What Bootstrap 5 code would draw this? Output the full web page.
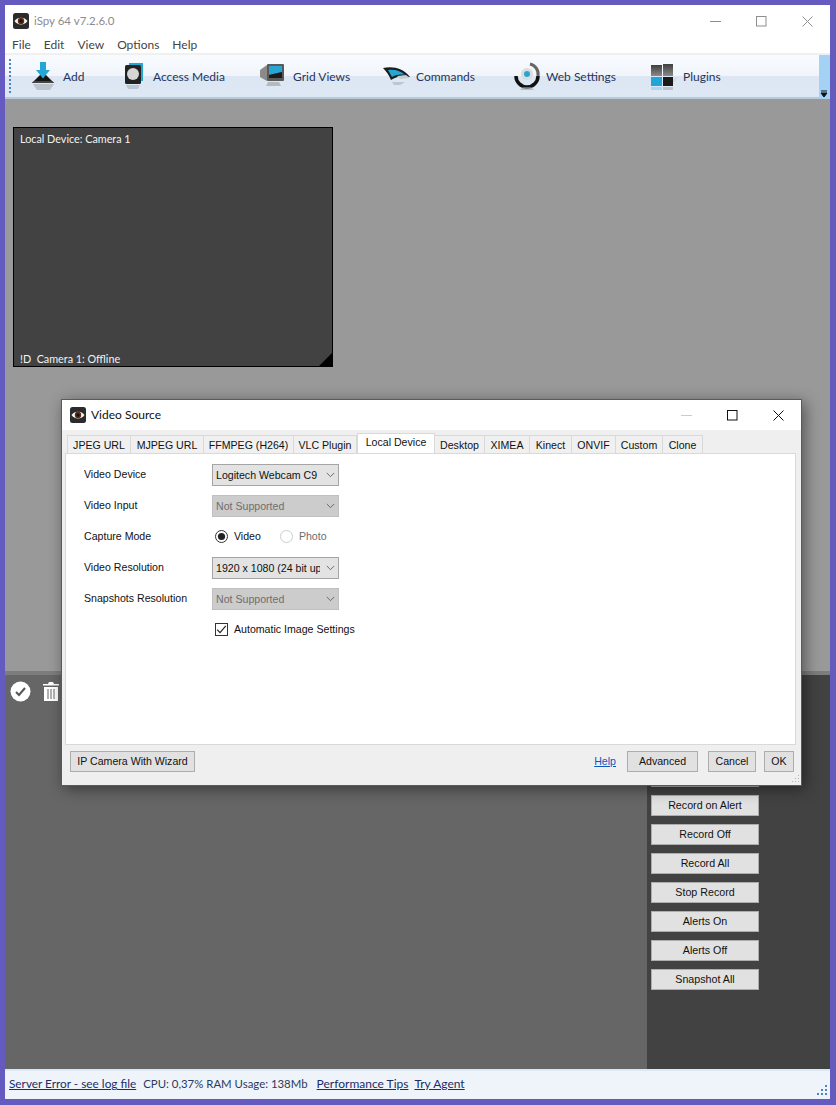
<!DOCTYPE html>
<html lang="en">
<head>
<meta charset="utf-8">
<title>iSpy 64</title>
<link href="https://cdn.jsdelivr.net/npm/bootstrap@5.3.0/dist/css/bootstrap.min.css" rel="stylesheet">
<style>
html,body{height:100%;margin:0}
body{background:#645ac0;font-family:Lato,"Open Sans",sans-serif;font-size:12px;color:#111;overflow:hidden}
.app-win{position:relative;margin:5px 6px 0 5px;height:1094px;background:#fff;display:flex;flex-direction:column}
.title-row{height:32px;padding:0 0 0 8px;flex:none;color:#8c8c8c;font-size:11.5px}
.logo-ico{flex:none;display:block;margin-right:5px}
.win-ctl{width:46px;height:32px;display:flex;align-items:center;justify-content:center}
.menu-row{height:16px;flex:none;padding-left:7px;gap:13px;line-height:15px;color:#444}
.menu-row span{display:block}
.tool-strip{height:46px;flex:none;border-top:2px solid #f0f0f0;border-bottom:2px solid #b5cbdc;background:linear-gradient(#f8fbfe 0,#f1f5fb 50%,#dce7f3 51%,#dde8f3 100%);position:relative;padding-left:4px}
.grip{width:2px;height:34px;border-left:2px dotted #4a86c5;flex:none;margin-right:19px}
.tool-item{display:flex;align-items:center;color:#26345c;line-height:1;white-space:nowrap;flex:none}
.tool-item span{margin:1px 0 0 5px}
.tool-ico{flex:none;display:block}
.ti1{width:90px}.ti2{width:140px}.ti3{width:123px}.ti4{width:130px}.ti5{width:137px}
.over-flow{position:absolute;right:0;top:0;bottom:-2px;width:11px;background:#a3d2f5}
.over-flow svg{position:absolute;bottom:0;left:0}
.grey-area{height:572px;flex:none;background:#999;padding:28px 0 0 8px}
.cam-tile{width:320px;height:240px;background:#424242;border:1px solid #000;color:#f2f2f2;position:relative;font-size:10.8px;display:flex;flex-direction:column;justify-content:space-between;padding:3px 6px 0 6px}
.cam-foot{margin-bottom:-1px}
.cam-corner{position:absolute;right:0;bottom:0;width:0;height:0;border-left:13px solid transparent;border-bottom:13px solid #000}
.split-bar{height:4px;flex:none;background:#7d7d7d}
.lower-wrap{flex:1 1 auto;display:flex;min-height:0}
.lower-main{flex:1 1 auto;background:#666;padding:6px 0 0 5px;gap:11px;align-items:flex-start}
.lower-side{width:183px;flex:none;background:#424242;padding:91px 0 0 4px;gap:8px}
.side-btn{width:108px;height:21px;background:#e1e1e1;border:1px solid #adadad;border-radius:0;font-family:"Liberation Sans",Arial,sans-serif;font-size:10.7px;line-height:17px;padding:0;color:#111;text-align:center}
.status-row{height:30px;flex:none;background:#eff4fb;border-top:2px solid #dde8f5;color:#2b3a5e;font-size:12px;padding:0 0 2px 4px;gap:7px;position:relative}
.status-row a{color:#1b2c69}
.status-row .srv-link{font-size:11.8px}
.status-row .cpu-text{font-size:11.4px;margin-right:2px}
.status-row .try-link{margin-left:-1px}
.size-grip{position:absolute;right:2px;bottom:3px}
.dlg{position:absolute;left:56px;top:394px;width:741px;height:387px;background:#efefef;border:1px solid #5a5a5a;box-shadow:3px 3px 14px rgba(0,0,0,.45);display:flex;flex-direction:column;font-family:"Liberation Sans",Arial,sans-serif;font-size:10.6px}
.dlg-title{height:30px;flex:none;background:#fff;padding:0 0 0 8px;font-family:Lato,sans-serif;font-size:12px;color:#111}
.dlg-title .win-ctl{height:30px}
.tab-row{height:23px;flex:none;padding:3px 0 0 5px;gap:0;align-items:flex-end;border:0;flex-wrap:nowrap}
.tab-row .nav-link{height:18px;padding:0;line-height:18px;font-size:10.6px;color:#111;background:#f0f0f0;border:1px solid #d9d9d9;border-bottom:0;border-left:0;border-radius:0;text-align:center;margin:0;white-space:nowrap}
.tab-row .nav-item:first-child .nav-link{border-left:1px solid #d9d9d9}
.tab-row .nav-link.active{height:21px;background:#fff;border:1px solid #d9d9d9;border-bottom:1px solid #fff;margin-bottom:-1px;line-height:16px;color:#111}
.t1{width:64px}.t2{width:73px}.t3{width:90px}.t4{width:63px}.t5{width:78px}.t6{width:50px}.t7{width:45px}.t8{width:42px}.t9{width:44px}.t10{width:47px}.t11{width:40px}
.tab-body{margin:0 5px 0 3px;height:292px;flex:none;background:#fff;border:1px solid #d9d9d9;padding:5px 0 0 18px}
.f-row{height:31px;display:flex;align-items:center;flex:none}
.f-lab{width:128px;flex:none;font-size:10.6px;color:#111}
.f-sel{width:127px;height:22px;padding:0 18px 0 3px;font-size:10.6px;line-height:20px;border:1px solid #a5a5a5;border-radius:0;background-color:#e3e3e3;color:#111;background-position:right 3px center;background-size:9px 6px;background-image:url("data:image/svg+xml,%3csvg xmlns='http://www.w3.org/2000/svg' viewBox='0 0 11 7'%3e%3cpath d='M1 1l4.500 4.500L10 1' fill='none' stroke='%23555' stroke-width='1'/%3e%3c/svg%3e")}
.f-sel:disabled{background-color:#ccc;color:#6e6e6e;border-color:#c0c0c0}
.f-opts{gap:11px;margin-left:3px;padding-top:1px}
.f-check{margin:0;padding:0;min-height:0;display:flex;align-items:center;gap:6px;font-size:10.6px}
.f-check .form-check-input{float:none;margin:0;width:13px;height:13px;flex:none;background-color:#fff;border:1px solid #333}
.f-check .form-check-input:checked{background-color:#fff;border-color:#333}
.f-check input[type=radio]:checked{background-image:url("data:image/svg+xml,%3csvg xmlns='http://www.w3.org/2000/svg' viewBox='0 0 13 13'%3e%3ccircle cx='6.500' cy='6.500' r='3.600' fill='%23222'/%3e%3c/svg%3e");background-size:13px 13px}
.f-check input[type=checkbox]:checked{background-image:url("data:image/svg+xml,%3csvg xmlns='http://www.w3.org/2000/svg' viewBox='0 0 13 13'%3e%3cpath d='M2.200 6.600 5 9.600 10.800 2.800' fill='none' stroke='%23222' stroke-width='1.200'/%3e%3c/svg%3e");background-size:13px 13px;border-radius:0}
.f-check input:disabled{opacity:1;border-color:#ccc}
.f-check label{opacity:1!important;color:#111}
.f-check .lab-off{color:#6d6d6d}
.auto-chk{margin-left:3px}
.auto-chk label{margin-top:1px}
.photo-opt{margin-left:8px}
.dlg-foot{flex:1 1 auto;padding:6px 7px 0 8px;gap:0;position:relative}
.dlg-btn{height:21px;background:#e1e1e1;border:1px solid #adadad;border-radius:0;font-size:10.6px;line-height:17px;padding:0;color:#111}
.b-wiz{width:125px}.b-adv{width:71px}.b-can{width:48px;margin-left:10px}.b-ok{width:30px;margin-left:8px}
.help-link{color:#0a57c2;font-size:10.6px;margin:3px 11px 0 auto}
.dlg-grip{position:absolute;right:1px;bottom:1px}
</style>
</head>
<body>
<div class="app-win">
  <div class="title-row d-flex align-items-center">
    <svg class="logo-ico" width="16" height="16" viewBox="0 0 16 16"><rect width="16" height="16" rx="2.500" fill="#2b2b2b"/><path d="M1.500 8C4 3.500 12 3.500 14.500 8 12 12.500 4 12.500 1.500 8z" fill="#f4f4f4"/><circle cx="8" cy="8" r="3.200" fill="#5a2a16"/><circle cx="8" cy="8" r="1.500" fill="#111"/></svg>
    <span>iSpy 64 v7.2.6.0</span>
    <div class="ms-auto d-flex">
      <div class="win-ctl"><svg width="11" height="11" viewBox="0 0 11 11"><path d="M0 5.500H11" stroke="#8d8d8d"/></svg></div>
      <div class="win-ctl"><svg width="11" height="11" viewBox="0 0 11 11"><rect x=".5" y=".5" width="9.500" height="9.500" fill="none" stroke="#8d8d8d"/></svg></div>
      <div class="win-ctl"><svg width="11" height="11" viewBox="0 0 11 11"><path d="M.5.500 10.500 10.500M10.500.500.500 10.500" stroke="#8d8d8d" fill="none"/></svg></div>
    </div>
  </div>
  <div class="menu-row d-flex"><span>File</span><span>Edit</span><span>View</span><span>Options</span><span>Help</span></div>
  <div class="tool-strip d-flex align-items-center">
    <div class="grip"></div>
    <div class="tool-item ti1"><svg class="tool-ico" width="28" height="30" viewBox="0 0 28 30"><path d="M2 22 13 11 24 22z" fill="#151515"/><path d="M2 22 4 20H22L24 22z" fill="#444"/><path d="M10 1h6v8h4l-7 8.500-7-8.500h4z" fill="#25a7d6"/><path d="M3 23H24L20 29H7z" fill="#9aa6ae" opacity=".55"/></svg><span>Add</span></div>
    <div class="tool-item ti2"><svg class="tool-ico" width="28" height="30" viewBox="0 0 28 30"><path d="M9 2h14v18h-3V5H9z" fill="#25a7d6"/><rect x="5" y="4" width="16" height="19" rx="1.500" fill="#222"/><circle cx="13" cy="13" r="6" fill="#d5d5d5"/><path d="M6 24h14l-2 4H8z" fill="#9aa6ae" opacity=".5"/></svg><span>Access Media</span></div>
    <div class="tool-item ti3"><svg class="tool-ico" width="28" height="30" viewBox="0 0 28 30"><path d="M0 9 7 4v16L0 16z" fill="#8a8a8a"/><rect x="7" y="3" width="17" height="17" rx="1" fill="#5a5a5a"/><path d="M9 5h13v6L9 14z" fill="#25a7d6"/><path d="M9 14l13-3v6H9z" fill="#1c1c1c"/><path d="M8 21h11l2 4H6z" fill="#a0a8ae" opacity=".7"/></svg><span>Grid Views</span></div>
    <div class="tool-item ti4"><svg class="tool-ico" width="28" height="30" viewBox="0 0 28 30"><path d="M0 7C10 5 20 7 27 16 21 15 13 15 8 19 6 14 3 10 0 7z" fill="#1c1c1c"/><path d="M5 9C12 8 18 10 22 14 17 13 12 14 9 16z" fill="#25a7d6"/><path d="M14 15l9-1 4 3-10 1z" fill="#c6ccd0"/><path d="M9 21h13l-5 3H11z" fill="#9aa6ae" opacity=".5"/></svg><span>Commands</span></div>
    <div class="tool-item ti5"><svg class="tool-ico" width="28" height="30" viewBox="0 0 28 30"><path d="M17 3A10.500 10.500 0 0 1 25 15" fill="none" stroke="#666" stroke-width="3"/><path d="M25 15A11 11 0 0 1 3 15" fill="none" stroke="#111" stroke-width="3.500"/><circle cx="14" cy="13" r="6" fill="#dcdcdc"/><circle cx="14" cy="13" r="3" fill="#25a7d6"/><path d="M7 29h14l-3-3H10z" fill="#9aa6ae" opacity=".6"/></svg><span>Web Settings</span></div>
    <div class="tool-item"><svg class="tool-ico" width="28" height="30" viewBox="0 0 28 30"><defs><linearGradient id="gTop" x1="0" y1="0" x2="0" y2="1"><stop offset="0" stop-color="#3f3f3f"/><stop offset="1" stop-color="#8a8a8a"/></linearGradient></defs><rect x="1" y="4" width="11" height="11" fill="url(#gTop)"/><rect x="13" y="3" width="10" height="12" fill="url(#gTop)"/><rect x="1" y="16" width="11" height="9" fill="#1fa6d8"/><rect x="13" y="16" width="10" height="9" fill="#1a1a1a"/><path d="M23 18l5-2-5 7z" fill="#d3dbe3"/><rect x="1" y="26" width="11" height="3" fill="#1fa6d8" opacity=".25"/><rect x="13" y="26" width="10" height="3" fill="#555" opacity=".25"/></svg><span>Plugins</span></div>
    <div class="over-flow"><svg width="11" height="9" viewBox="0 0 11 9"><path d="M2 1H8M2 3H8L5 7z" stroke="#111" stroke-width="1" fill="#111"/></svg></div>
  </div>
  <div class="grey-area">
    <div class="cam-tile"><span>Local Device: Camera 1</span><span class="cam-foot">!D&nbsp; Camera 1: Offline</span><div class="cam-corner"></div></div>
  </div>
  <div class="split-bar"></div>
  <div class="lower-wrap">
    <div class="lower-main d-flex">
      <svg width="21" height="21" viewBox="0 0 21 21"><circle cx="10.500" cy="10.500" r="10" fill="#fff"/><path d="M6 11l3 3 6-7" fill="none" stroke="#555" stroke-width="2"/></svg>
      <svg width="18" height="21" viewBox="0 0 18 21"><path d="M1 3H6L7 1h4l1 2h5v1.500H1z" fill="#fff"/><path d="M2 6H16V20H2z" fill="#fff"/><path d="M6 8v10M9 8v10M12 8v10" stroke="#666" stroke-width="1"/></svg>
    </div>
    <div class="lower-side d-flex flex-column">
      <button class="btn side-btn" type="button"></button>
      <button class="btn side-btn" type="button">Record on Alert</button>
      <button class="btn side-btn" type="button">Record Off</button>
      <button class="btn side-btn" type="button">Record All</button>
      <button class="btn side-btn" type="button">Stop Record</button>
      <button class="btn side-btn" type="button">Alerts On</button>
      <button class="btn side-btn" type="button">Alerts Off</button>
      <button class="btn side-btn" type="button">Snapshot All</button>
    </div>
  </div>
  <div class="status-row d-flex align-items-center">
    <a class="srv-link" href="#">Server Error - see log file</a><span class="cpu-text">CPU: 0,37% RAM Usage: 138Mb</span><a href="#">Performance Tips</a><a class="try-link" href="#">Try Agent</a>
    <svg class="size-grip" width="11" height="11" viewBox="0 0 11 11"><path d="M8 0h2v2H8zM4 4h2v2H4zM8 4h2v2H8zM0 8h2v2H0zM4 8h2v2H4zM8 8h2v2H8z" fill="#4a86c5"/></svg>
  </div>

  <div class="dlg">
    <div class="dlg-title d-flex align-items-center">
      <svg class="logo-ico" width="16" height="16" viewBox="0 0 16 16"><rect width="16" height="16" rx="2.500" fill="#2b2b2b"/><path d="M1.500 8C4 3.500 12 3.500 14.500 8 12 12.500 4 12.500 1.500 8z" fill="#f4f4f4"/><circle cx="8" cy="8" r="3.200" fill="#5a2a16"/><circle cx="8" cy="8" r="1.500" fill="#111"/></svg>
      <span>Video Source</span>
      <div class="ms-auto d-flex">
        <div class="win-ctl"><svg width="11" height="11" viewBox="0 0 11 11"><path d="M0 5.500H11" stroke="#ccc"/></svg></div>
        <div class="win-ctl"><svg width="11" height="11" viewBox="0 0 11 11"><rect x=".5" y=".5" width="9.500" height="9.500" fill="none" stroke="#111"/></svg></div>
        <div class="win-ctl"><svg width="11" height="11" viewBox="0 0 11 11"><path d="M.5.500 10.500 10.500M10.500.500.500 10.500" stroke="#111" fill="none"/></svg></div>
      </div>
    </div>
    <ul class="nav nav-tabs tab-row">
      <li class="nav-item"><a class="nav-link t1" href="#">JPEG URL</a></li>
      <li class="nav-item"><a class="nav-link t2" href="#">MJPEG URL</a></li>
      <li class="nav-item"><a class="nav-link t3" href="#">FFMPEG (H264)</a></li>
      <li class="nav-item"><a class="nav-link t4" href="#">VLC Plugin</a></li>
      <li class="nav-item"><a class="nav-link active t5" href="#">Local Device</a></li>
      <li class="nav-item"><a class="nav-link t6" href="#">Desktop</a></li>
      <li class="nav-item"><a class="nav-link t7" href="#">XIMEA</a></li>
      <li class="nav-item"><a class="nav-link t8" href="#">Kinect</a></li>
      <li class="nav-item"><a class="nav-link t9" href="#">ONVIF</a></li>
      <li class="nav-item"><a class="nav-link t10" href="#">Custom</a></li>
      <li class="nav-item"><a class="nav-link t11" href="#">Clone</a></li>
    </ul>
    <div class="tab-body">
      <div class="f-row"><div class="f-lab">Video Device</div><select class="form-select f-sel"><option>Logitech Webcam C9</option></select></div>
      <div class="f-row"><div class="f-lab">Video Input</div><select class="form-select f-sel" disabled><option>Not Supported</option></select></div>
      <div class="f-row"><div class="f-lab">Capture Mode</div><div class="d-flex f-opts">
        <div class="form-check f-check"><input class="form-check-input" type="radio" name="capmode" id="r1" checked><label for="r1">Video</label></div>
        <div class="form-check f-check photo-opt"><input class="form-check-input" type="radio" name="capmode" id="r2" disabled><label for="r2" class="lab-off">Photo</label></div>
      </div></div>
      <div class="f-row"><div class="f-lab">Video Resolution</div><select class="form-select f-sel"><option>1920 x 1080 (24 bit up to 30 fps)</option></select></div>
      <div class="f-row"><div class="f-lab">Snapshots Resolution</div><select class="form-select f-sel" disabled><option>Not Supported</option></select></div>
      <div class="f-row"><div class="f-lab"></div><div class="form-check f-check auto-chk"><input class="form-check-input" type="checkbox" id="c1" checked><label for="c1">Automatic Image Settings</label></div></div>
    </div>
    <div class="dlg-foot d-flex align-items-start">
      <button class="btn dlg-btn b-wiz" type="button">IP Camera With Wizard</button>
      <a class="help-link" href="#">Help</a>
      <button class="btn dlg-btn b-adv" type="button">Advanced</button>
      <button class="btn dlg-btn b-can" type="button">Cancel</button>
      <button class="btn dlg-btn b-ok" type="button">OK</button>
      <svg class="dlg-grip" width="9" height="9" viewBox="0 0 9 9"><path d="M7 0h1v1H7zM7 3h1v1H7zM4 3h1v1H4zM7 6h1v1H7zM4 6h1v1H4zM1 6h1v1H1z" fill="#b0b0b0"/></svg>
    </div>
  </div>
</div>
</body>
</html>
